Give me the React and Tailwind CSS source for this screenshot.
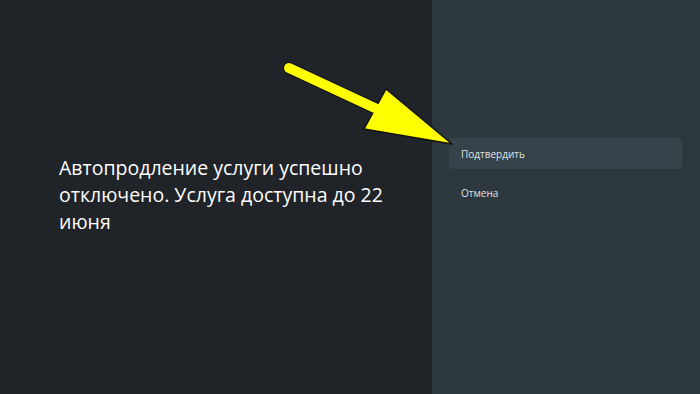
export default function App() {
  return (
    <div className="relative w-[700px] h-[394px] flex bg-[#202327] overflow-hidden" style={{ fontFamily: "'Open Sans', Roboto, 'Noto Sans', sans-serif" }}>
      {/* Message */}
      <div className="w-[432px] flex items-center pl-[59px] pr-4">
        <p className="text-white text-[19.5px] leading-[27px] -mt-[6px]">
          Автопродление услуги успешно отключено. Услуга доступна до 22 июня
        </p>
      </div>

      {/* Actions panel */}
      <div className="flex-1 bg-[#2c373e] pt-[138px] pl-[17px] pr-[18px]">
        <div className="h-[31px] rounded bg-[#37434a] flex items-center px-3 pt-[2px] text-[10px] text-[#dfe3e6]">
          Подтвердить
        </div>
        <div className="h-[31px] mt-[7px] flex items-center px-3 pt-[3px] text-[10px] text-[#dfe3e6]">
          Отмена
        </div>
      </div>

      {/* Arrow */}
      <svg className="absolute left-0 top-0 pointer-events-none" width="700" height="394">
        <line x1="289" y1="68" x2="392" y2="116" stroke="#111" strokeWidth="12" strokeLinecap="round" />
        <polygon points="386,89 452,144 364,129" fill="#ffff00" stroke="#111" strokeWidth="1.5" strokeLinejoin="round" />
        <line x1="289" y1="68" x2="392" y2="116" stroke="#ffff00" strokeWidth="10" strokeLinecap="round" />
      </svg>
    </div>
  );
}
